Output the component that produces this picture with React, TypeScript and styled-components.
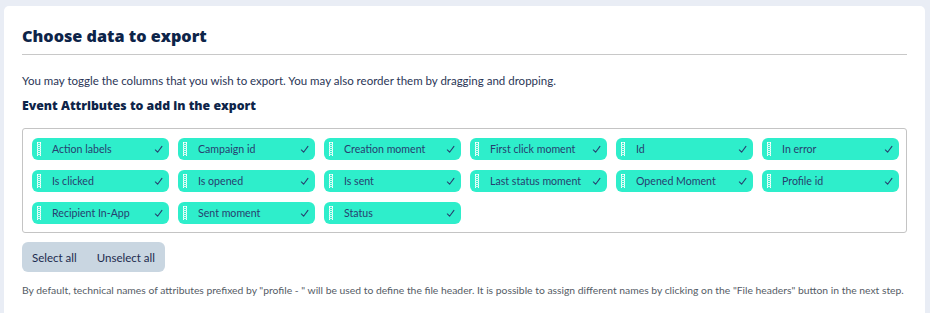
import React from "react";
import styled, { createGlobalStyle } from "styled-components";

const Global = createGlobalStyle`
  html, body { margin: 0; padding: 0; background: #e9edf5; }
  body { font-family: "Lato", "Noto Sans", sans-serif; }
  * { box-sizing: border-box; }
`;

const Page = styled.div`
  padding: 6px 5px 0 4px;
  height: 313px;
  overflow: hidden;
`;

const Card = styled.div`
  background: #ffffff;
  border-radius: 5px 5px 0 0;
  padding: 19px 18px 20px 18px;
  min-height: 320px;
`;

const Title = styled.h1`
  margin: 0;
  font-family: "Open Sans", sans-serif;
  font-weight: 800;
  font-size: 16.2px;
  line-height: 23px;
  color: #0d2449;
  padding-bottom: 6px;
  border-bottom: 1px solid #c8c8c8;
`;

const Intro = styled.p`
  margin: 19px 0 0 0;
  font-size: 11.5px;
  line-height: 14px;
  color: #2a3556;
`;

const SubTitle = styled.h2`
  margin: 9px 0 0 0;
  font-family: "Open Sans", sans-serif;
  font-weight: 800;
  font-size: 12.3px;
  line-height: 18px;
  color: #0d2449;
`;

const ChipBox = styled.div`
  margin-top: 13px;
  border: 1px solid #c4c4c4;
  border-radius: 3px;
  padding: 9px 8px 8px 9px;
  display: grid;
  grid-template-columns: repeat(6, 137px);
  column-gap: 9px;
  row-gap: 10px;
  min-height: 105px;
  align-content: start;
`;

const Chip = styled.div`
  height: 22px;
  background: #2eeecb;
  border-radius: 6px;
  display: flex;
  align-items: center;
  padding: 0 6px 0 5px;
  color: #27406f;
  font-size: 10.6px;
`;

const Grip = styled.span`
  width: 4px;
  height: 14px;
  margin-right: 11px;
  border-left: 1px dotted rgba(255, 255, 255, 0.95);
  border-right: 1px dotted rgba(255, 255, 255, 0.95);
  background: repeating-linear-gradient(
    to bottom,
    rgba(255, 255, 255, 0.75) 0 1px,
    transparent 1px 2px
  );
  flex: none;
`;

const ChipLabel = styled.span`
  flex: 1;
  white-space: nowrap;
`;

const Check = styled.svg`
  width: 9px;
  height: 9px;
  flex: none;
`;

const ButtonGroup = styled.div`
  display: inline-flex;
  margin-top: 9px;
  background: #c9d6e1;
  border-radius: 6px;
  height: 30px;
  align-items: center;
  padding: 0 10px;
  gap: 20px;
`;

const GroupButton = styled.button`
  border: none;
  background: transparent;
  padding: 0;
  font-family: "Lato", sans-serif;
  font-size: 11.5px;
  color: #1d2c4f;
  cursor: pointer;
`;

const Note = styled.p`
  margin: 12px 0 0 0;
  font-size: 10.35px;
  color: #555c66;
  white-space: nowrap;
`;

const attributes = [
  "Action labels",
  "Campaign id",
  "Creation moment",
  "First click moment",
  "Id",
  "In error",
  "Is clicked",
  "Is opened",
  "Is sent",
  "Last status moment",
  "Opened Moment",
  "Profile id",
  "Recipient In-App",
  "Sent moment",
  "Status",
];

export default function App() {
  return (
    <>
      <Global />
      <Page>
        <Card>
          <Title>Choose data to export</Title>
          <Intro>
            You may toggle the columns that you wish to export. You may also reorder them by dragging and dropping.
          </Intro>
          <SubTitle>Event Attributes to add in the export</SubTitle>
          <ChipBox>
            {attributes.map((a) => (
              <Chip key={a}>
                <Grip />
                <ChipLabel>{a}</ChipLabel>
                <Check viewBox="0 0 10 10">
                  <path d="M1.5 5.5 L4 8 L8.8 1.5" fill="none" stroke="#27406f" strokeWidth="1.2" strokeLinecap="round" strokeLinejoin="round" />
                </Check>
              </Chip>
            ))}
          </ChipBox>
          <ButtonGroup>
            <GroupButton>Select all</GroupButton>
            <GroupButton>Unselect all</GroupButton>
          </ButtonGroup>
          <Note>
            By default, technical names of attributes prefixed by "profile - " will be used to define the file header. It is possible to assign different names by clicking on the "File headers" button in the next step.
          </Note>
        </Card>
      </Page>
    </>
  );
}
